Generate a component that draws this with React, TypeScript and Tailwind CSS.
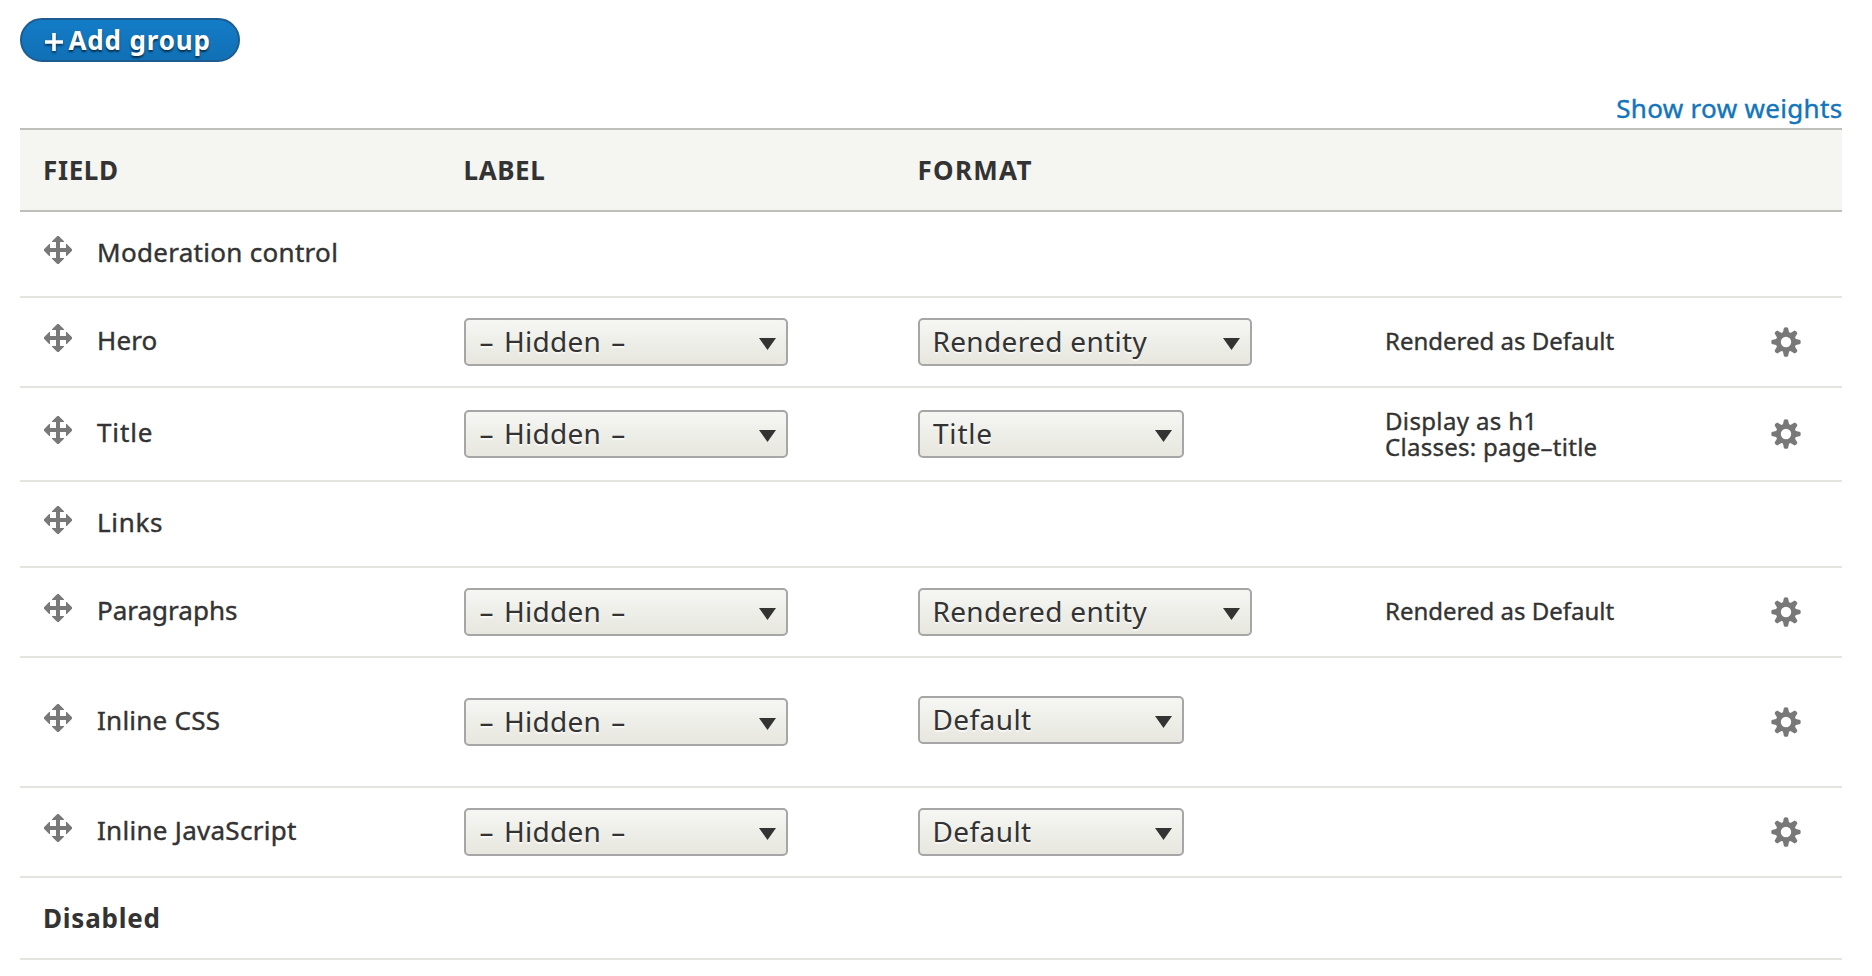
import React from "react";
import clsx from "clsx";

type Row = {
  name: string;
  height: string;
  tracking: string;
  label?: boolean;
  format?: { text: string; className: string };
  summary?: string[];
};

const rendered = { text: "Rendered entity", className: "w-[334px] pl-[12.5px] tracking-[0.33px]" };

const rows: Row[] = [
  { name: "Moderation control", height: "h-[86px]", tracking: "tracking-[0.3px]" },
  { name: "Hero", height: "h-[90px]", tracking: "tracking-[0.15px]", label: true, format: rendered, summary: ["Rendered as Default"] },
  {
    name: "Title",
    height: "h-[94px]",
    tracking: "tracking-[0.86px]",
    label: true,
    format: { text: "Title", className: "w-[266px] pl-[13px] tracking-[0.8px]" },
    summary: ["Display as h1", "Classes: page–title"],
  },
  { name: "Links", height: "h-[86px]", tracking: "tracking-[0.68px]" },
  { name: "Paragraphs", height: "h-[90px]", tracking: "tracking-normal", label: true, format: rendered, summary: ["Rendered as Default"] },
  {
    name: "Inline CSS",
    height: "h-[130px]",
    tracking: "tracking-[0.25px]",
    label: true,
    format: { text: "Default", className: "mb-1 w-[266px] pl-[12.5px] tracking-[0.4px]" },
    summary: [],
  },
  {
    name: "Inline JavaScript",
    height: "h-[90px]",
    tracking: "tracking-[0.28px]",
    label: true,
    format: { text: "Default", className: "w-[266px] pl-[12.5px] tracking-[0.4px]" },
    summary: [],
  },
];

const summaryTracking: Record<string, string> = {
  "Rendered as Default": "tracking-normal",
  "Display as h1": "tracking-[0.35px]",
  "Classes: page–title": "tracking-[0.27px]",
};

const columns = "grid grid-cols-[444px_454px_468px_385px_auto] items-center";

function MoveIcon() {
  return (
    <svg viewBox="0 0 28 28" className="mb-1 size-7 shrink-0" fill="#787878">
      <path d="M13.3 0h1.4L20 5.2V6h-4v6h6V8h.8L28 13.3v1.4L22.8 20H22v-4h-6v6h4v.8L14.7 28h-1.4L8 22.8V22h4v-6H6v4h-.8L0 14.7v-1.4L5.2 8H6v4h6V6H8v-.8z" />
    </svg>
  );
}

function GearIcon() {
  return (
    <svg viewBox="-15 -15 30 30" className="size-[30px]" fill="#787878">
      <circle r="7.7" fill="none" stroke="#787878" strokeWidth="5" />
      {[0, 45, 90, 135, 180, 225, 270, 315].map((angle) => (
        <path key={angle} d="M-3.2-9L-2-14.2Q0-15.2 2-14.2L3.2-9z" transform={`rotate(${angle})`} />
      ))}
    </svg>
  );
}

function Select({ children, className }: { children: string; className: string }) {
  return (
    <button
      type="button"
      className={clsx(
        "flex h-12 items-center justify-between rounded-[5px] border-2 border-[#a6a6a6] bg-linear-to-b from-[#f6f6f3] to-[#e7e7df] pr-[10px] text-[28px] text-[#333] [text-shadow:0_2px_rgba(255,255,255,0.6)]",
        className,
      )}
    >
      <span className="pb-0.5 leading-[38px] whitespace-nowrap">{children}</span>
      <svg viewBox="0 0 17 12" className="mt-1 h-3 w-[17px]" fill="#333">
        <path d="M0 0h17L8.5 12z" />
      </svg>
    </button>
  );
}

export default function App() {
  return (
    <main className="h-[976px] bg-white px-5 pt-[18px] pr-[30px] font-['Noto_Sans','Open_Sans',sans-serif] text-[26px] leading-9 text-[#333]">
      <button
        type="button"
        className="flex h-11 w-[220px] items-center rounded-full border-2 border-[#1e5c90] bg-linear-to-b from-[#137cc7] to-[#1170b5] pl-[23px] font-bold tracking-[0.84px] text-white [text-shadow:0_2px_2px_rgba(0,0,0,0.6)]"
      >
        <svg viewBox="0 0 18 18" className="mt-1 mr-[5.5px] size-[18px] overflow-visible drop-shadow-[0_2px_1px_rgba(0,0,0,0.5)]" fill="#fff">
          <path d="M7.2 0h3.6v7.2H18v3.6h-7.2V18H7.2v-7.2H0V7.2h7.2z" />
        </svg>
        <span className="whitespace-nowrap">Add group</span>
      </button>

      <div className="mt-7 flex h-[38px] justify-end">
        <a className="-mr-[0.5px] tracking-[0.33px] text-[#1275bb] [-webkit-text-stroke:0.4px]">Show row weights</a>
      </div>

      <div className={clsx(columns, "h-[84px] border-y-2 border-[#bfbfba] bg-[#f5f5f2] font-bold")}>
        <span className="pl-[23px] tracking-[0.63px]">FIELD</span>
        <span className="-ml-[0.5px] tracking-[0.6px]">LABEL</span>
        <span className="-ml-[0.5px] tracking-[1.3px]">FORMAT</span>
      </div>

      {rows.map((row) => (
        <div key={row.name} className={clsx(columns, "border-b-2 border-[#e5e5e0]", row.height)}>
          <div className="flex items-center gap-[25px] pb-1 pl-6 [-webkit-text-stroke:0.4px]">
            <MoveIcon />
            <span className={clsx("whitespace-nowrap", row.tracking)}>{row.name}</span>
          </div>
          <div>
            {row.label && (
              <Select className="w-[324px] pl-[13.5px] tracking-[0.25px] [word-spacing:2.7px]">– Hidden –</Select>
            )}
          </div>
          <div>{row.format && <Select className={row.format.className}>{row.format.text}</Select>}</div>
          <div className={clsx("-ml-px text-[24px] leading-[26px] [-webkit-text-stroke:0.35px]", row.summary?.length === 1 && "pb-[3px]")}>
            {row.summary?.map((line) => (
              <div key={line} className={clsx("whitespace-nowrap", summaryTracking[line])}>
                {line}
              </div>
            ))}
          </div>
          <div>{row.summary && <GearIcon />}</div>
        </div>
      ))}

      <div className="flex h-[82px] items-center border-b-2 border-[#e5e5e0] pl-[23px] font-bold tracking-[0.77px]">Disabled</div>
    </main>
  );
}
